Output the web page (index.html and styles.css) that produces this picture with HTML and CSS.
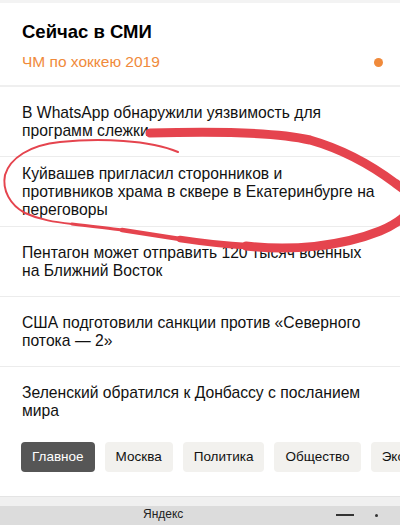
FILE: index.html
```html
<!DOCTYPE html>
<html lang="ru">
<head>
<meta charset="utf-8">
<title>Сейчас в СМИ</title>
<link rel="stylesheet" href="styles.css">
</head>
<body>
<div class="screen">
  <div class="top-edge"></div>
  <section class="media">
    <header class="media-head">
      <h1 class="media-title">Сейчас в СМИ</h1>
      <div class="media-topic">
        <span>ЧМ по хоккею 2019</span>
        <span class="topic-dot"></span>
      </div>
    </header>
    <ul class="news">
      <li class="news-item">В WhatsApp обнаружили уязвимость для программ слежки</li>
      <li class="news-item">Куйвашев пригласил сторонников и противников храма в сквере в Екатеринбурге на переговоры</li>
      <li class="news-item">Пентагон может отправить 120 тысяч военных на Ближний Восток</li>
      <li class="news-item">США подготовили санкции против «Северного потока — 2»</li>
      <li class="news-item news-item-last">Зеленский обратился к Донбассу с посланием мира</li>
    </ul>
    <nav class="rubrics">
      <span class="chip chip-active">Главное</span>
      <span class="chip">Москва</span>
      <span class="chip">Политика</span>
      <span class="chip">Общество</span>
      <span class="chip">Экономика</span>
    </nav>
  </section>
  <footer class="tab-bar">
    <span class="tab-title">Яндекс</span>
    <span class="tab-dash"></span>
    <span class="tab-dot"></span>
  </footer>

  <!-- hand-drawn marker loop over the headlines -->
  <svg class="marker" width="400" height="525" viewBox="0 0 400 525" fill="none" stroke="#e5444e" stroke-linecap="round" stroke-linejoin="round">
    <path stroke-width="2" d="M178,152 C150,140 100,138 60,142 C30,145 10,158 5,175 C2,190 10,205 25,213 C40,220 55,222 72,224"/>
    <path stroke-width="3" d="M72,224 C90,226 105,228 122,230"/>
    <path stroke-width="4.5" d="M122,230 C142,233 160,236 180,239"/>
    <path stroke-width="6.5" d="M180,239 C200,242 222,245 246,246"/>
    <path stroke-width="9" d="M246,246 C290,251 340,247 380,231 C397,224 410,214 412,205 C413,196 405,190 395,183 C375,168 345,150 310,140 C280,133 220,131 150,133"/>
  </svg>
</div>
</body>
</html>
```
FILE: styles.css
```css
* {
  box-sizing: border-box;
}

html, body {
  margin: 0;
  padding: 0;
  background: #ffffff;
}

body {
  font-family: "Liberation Sans", Arial, sans-serif;
  color: #111111;
}

.screen {
  position: relative;
  width: 400px;
  height: 525px;
  overflow: hidden;
  display: flex;
  flex-direction: column;
}

.top-edge {
  height: 3px;
  background: #f3f3f3;
}

.media {
  flex: 1;
  display: flex;
  flex-direction: column;
}

.media-head {
  padding: 19px 17px 13px 22px;
  border-bottom: 2px solid #efefef;
}

.media-title {
  margin: 0;
  font-size: 18.5px;
  line-height: 20px;
  font-weight: bold;
  color: #000000;
}

.media-topic {
  margin-top: 10px;
  display: flex;
  align-items: center;
  justify-content: space-between;
  font-size: 15.5px;
  line-height: 20px;
  color: #f08a3b;
}

.topic-dot {
  width: 9px;
  height: 9px;
  border-radius: 50%;
  background: #f08a3b;
}

.news {
  list-style: none;
  margin: 0;
  padding: 0;
}

.news-item {
  height: 70px;
  padding: 0 23px 0 22px;
  display: flex;
  align-items: center;
  font-size: 15.7px;
  line-height: 18px;
  border-bottom: 1px solid #ececec;
}

.news-item-last {
  border-bottom: none;
}

.rubrics {
  display: flex;
  gap: 10px;
  margin-top: 5px;
  padding-left: 21px;
  overflow: hidden;
}

.chip {
  flex: none;
  height: 30px;
  padding: 0 11px;
  border-radius: 4px;
  background: #f2f1ee;
  font-size: 13.5px;
  line-height: 30px;
  color: #111111;
}

.chip-active {
  background: #565656;
  color: #ffffff;
}

.tab-bar {
  height: 29px;
  border-top: 1px solid #e4e4e4;
  background: linear-gradient(#f0f0f0 0 9px, #dcdcdc 9px);
  display: flex;
  align-items: flex-end;
  padding: 0 0 4px 143px;
}

.tab-title {
  font-size: 12px;
  line-height: 14px;
  color: #222222;
}

.tab-dash {
  width: 18px;
  height: 2px;
  background: #333333;
  margin: 0 0 5px 153px;
}

.tab-dot {
  width: 3px;
  height: 3px;
  border-radius: 50%;
  background: #333333;
  margin: 0 0 4.5px 21px;
}

.marker {
  position: absolute;
  left: 0;
  top: 0;
  pointer-events: none;
}
```
